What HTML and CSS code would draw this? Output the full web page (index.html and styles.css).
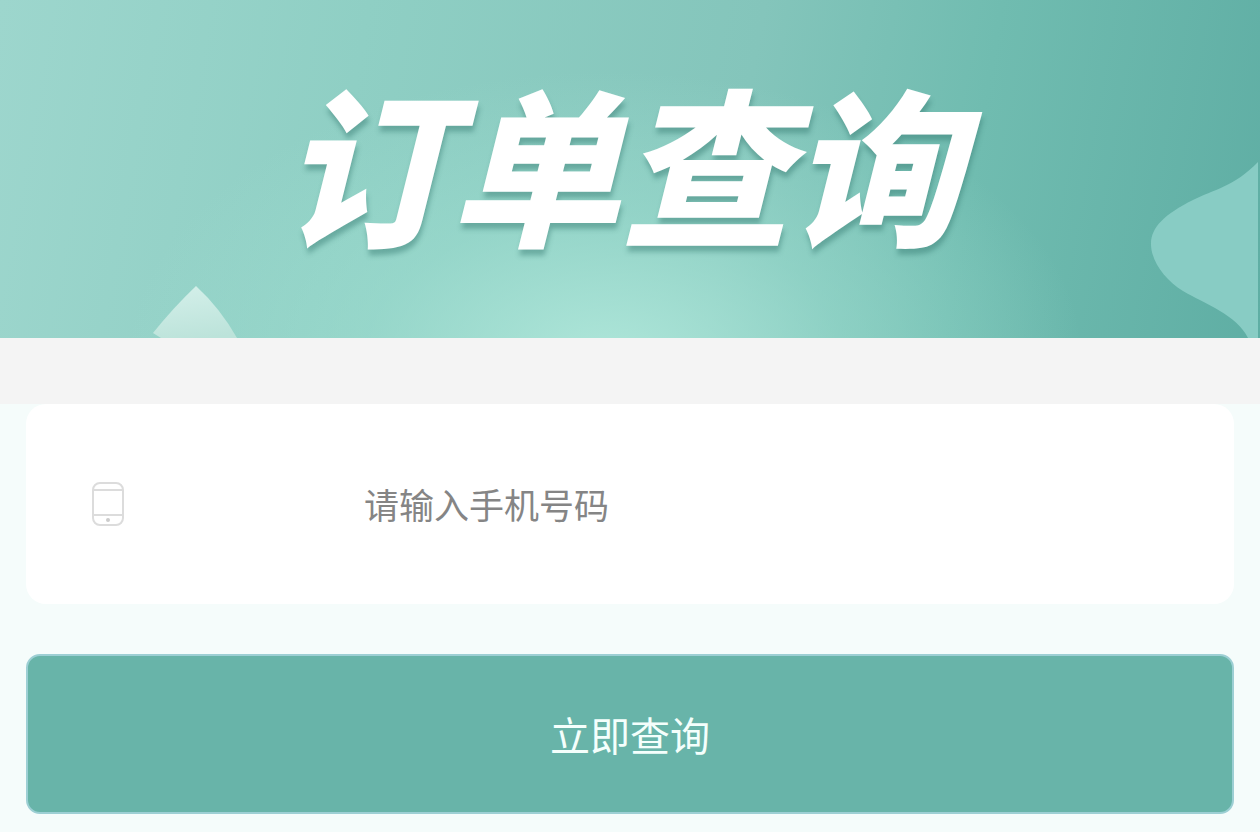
FILE: index.html
```html
<!DOCTYPE html>
<html lang="zh-CN">
<head>
    <meta charset="UTF-8">
    <meta name="viewport" content="width=device-width, initial-scale=1.0">
    <title>订单查询</title>
    <link rel="stylesheet" href="styles.css">
</head>
<body>
    <header class="banner">
        <svg class="banner-leaf" viewBox="0 0 84 52" aria-hidden="true">
            <defs>
                <linearGradient id="leafFill" x1="0.4" y1="0" x2="0.6" y2="1">
                    <stop offset="0" stop-color="#d3efe9"/>
                    <stop offset="1" stop-color="#bce3da"/>
                </linearGradient>
            </defs>
            <path d="M43 0 Q67 22 84 52 H8 L0 47 Q20 22 43 0Z" fill="url(#leafFill)"/>
        </svg>
        <svg class="banner-wave" viewBox="0 0 109 176" aria-hidden="true">
            <path d="M107 0 C84 24 62 28 42 38 C14 52 0 65 0 82 C0 99 14 118 32 129 C54 142 86 153 97 176 H107Z" fill="#88ccc4"/>
        </svg>
        <h1 class="banner-title">订单查询</h1>
    </header>

    <main class="content">
        <form id="queryForm">
            <div class="form-group">
                <label for="phone" class="phone-label" aria-label="手机号码">
                    <svg class="phone-icon" viewBox="0 0 32 44" fill="none" stroke="#dcdcdc" stroke-width="2" aria-hidden="true">
                        <rect x="1" y="1" width="30" height="42" rx="7"/>
                        <path d="M1 8H31M1 33H31"/>
                        <circle cx="16" cy="38" r="2" fill="#cccccc" stroke="none"/>
                    </svg>
                </label>
                <input type="tel" id="phone" name="phone" class="phone-input" placeholder="请输入手机号码">
            </div>
            <button type="submit" class="btn">立即查询</button>
        </form>
    </main>
</body>
</html>
```

FILE: styles.css
```css
/* General Styling */
* {
  box-sizing: border-box;
}

body {
  margin: 0;
  min-height: 100vh;
  font-family: "Noto Sans CJK SC", sans-serif;
  background-color: #f5fcfb;
}

/* Banner */
.banner {
  position: relative;
  overflow: hidden;
  padding: 40px 20px 58px 0;
  background:
    radial-gradient(ellipse 38% 85% at 48% 106%, rgba(178, 233, 220, 0.9), rgba(160, 224, 210, 0.5) 50%, rgba(150, 216, 202, 0) 100%),
    linear-gradient(100deg, #9dd6cd 0%, #8fcfc4 28%, #84c5bb 58%, #70bcb0 76%, #5faea4 100%);
}

.banner-title {
  position: relative;
  margin: 0;
  color: #ffffff;
  font-size: 170px;
  line-height: 240px;
  font-weight: 900;
  font-style: italic;
  text-align: center;
  text-shadow: 1px 6px 5px rgba(50, 120, 110, 0.45);
}

.banner-leaf {
  position: absolute;
  left: 153px;
  bottom: 0;
  width: 84px;
}

.banner-wave {
  position: absolute;
  right: 0;
  bottom: 0;
  width: 109px;
}

/* Form */
.content {
  border-top: 66px solid #f4f4f4;
  padding: 0 26px 18px;
}

.form-group {
  display: flex;
  align-items: center;
  height: 200px;
  margin-bottom: 50px;
  padding: 0 66px;
  background-color: #ffffff;
  border-radius: 20px;
}

.phone-label {
  flex: 0 0 25%;
}

.phone-icon {
  display: block;
  width: 32px;
}

.phone-input {
  flex: 1;
  min-width: 0;
  padding: 0 3px;
  border: none;
  outline: none;
  background: none;
  color: #333333;
  font-family: inherit;
  font-size: 35px;
  line-height: 52px;
}

.phone-input::placeholder {
  color: #858585;
}

.btn {
  display: block;
  width: 100%;
  height: 160px;
  border: 2px solid #9dcfd4;
  border-radius: 14px;
  background-color: #68b4a9;
  color: #f4fffc;
  font-family: inherit;
  font-size: 40px;
  cursor: pointer;
}
```
